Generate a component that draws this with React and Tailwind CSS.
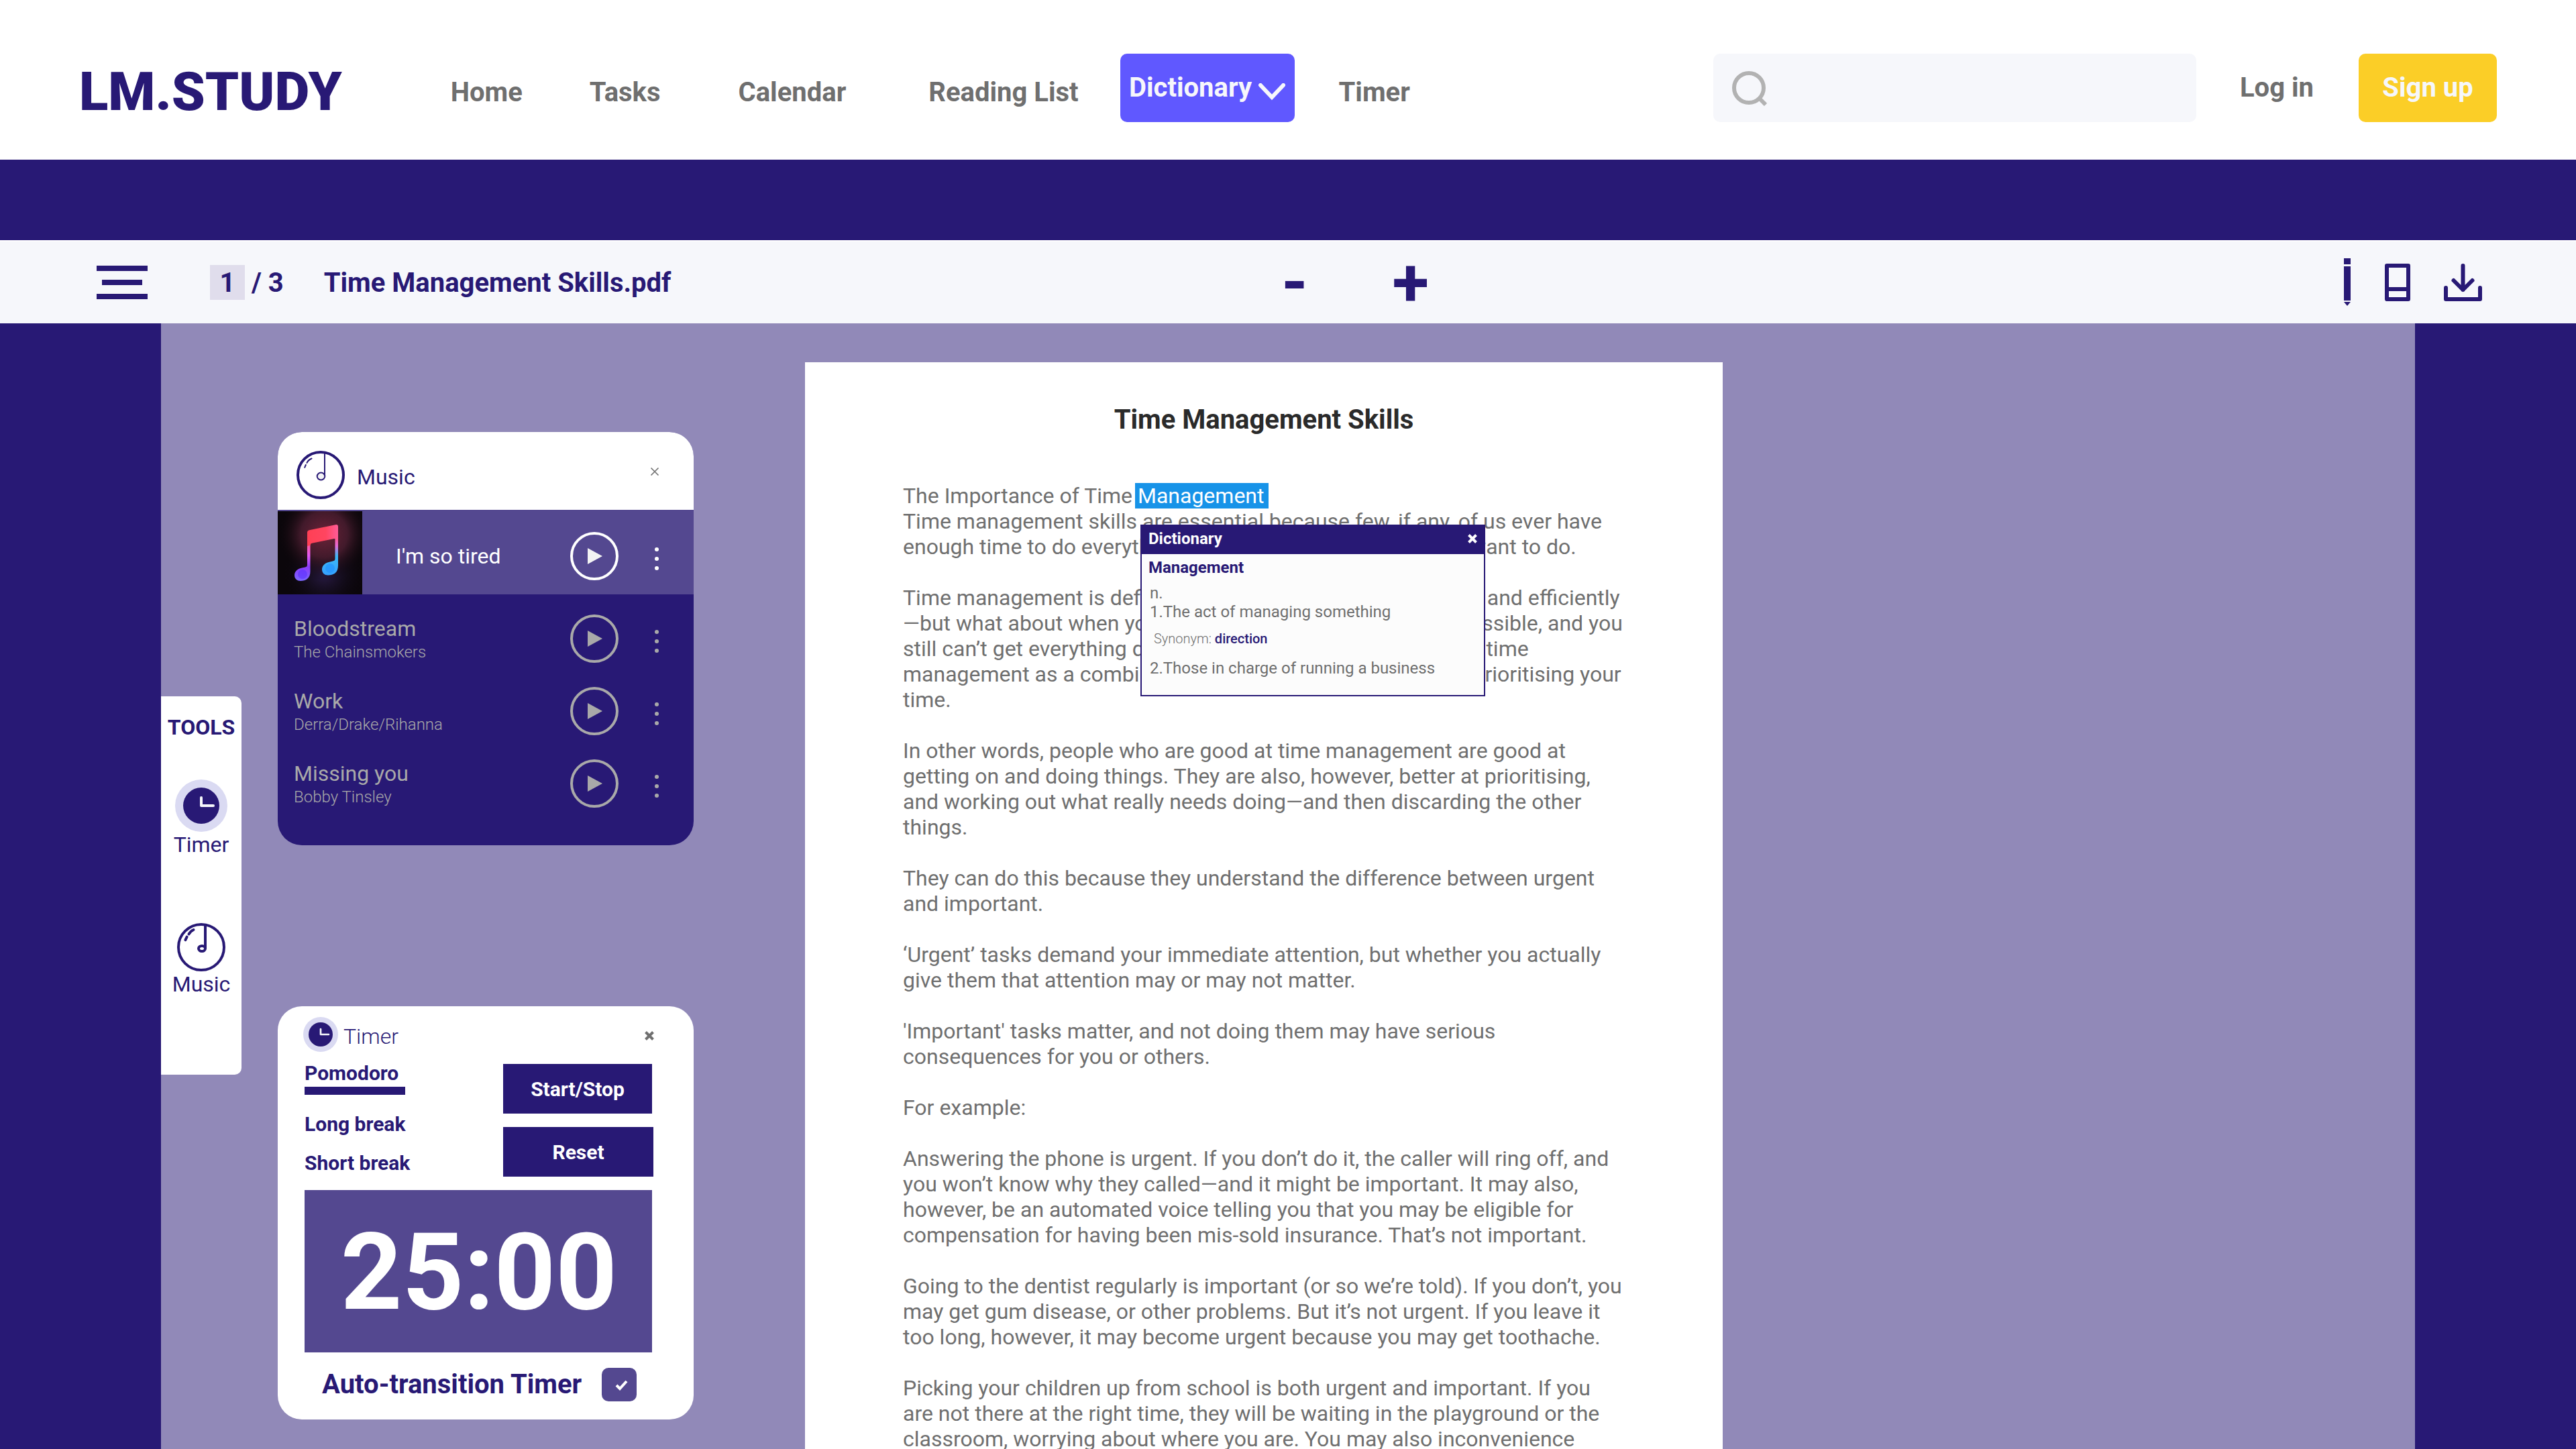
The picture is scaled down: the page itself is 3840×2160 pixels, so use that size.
import { useState } from "react";

const TRACKS = [
  { title: "Bloodstream", artist: "The Chainsmokers" },
  { title: "Work", artist: "Derra/Drake/Rihanna" },
  { title: "Missing you", artist: "Bobby Tinsley" },
];

function Clock({ className }) {
  return (
    <svg viewBox="0 0 78 78" className={className} aria-hidden="true">
      <circle cx="39" cy="39" r="39" fill="#dadaf2" />
      <circle cx="39" cy="39" r="27" fill="#281975" />
      <path d="M39 27V39H57" fill="none" stroke="#f6f7fb" strokeWidth="4" strokeLinecap="round" strokeLinejoin="round" />
    </svg>
  );
}

function Disc({ bold = false }) {
  return (
    <svg viewBox="0 0 72 72" className="size-[72px] shrink-0" fill="none" stroke="#281975" strokeLinecap="round" aria-hidden="true">
      <circle cx="36" cy="36" r="34" strokeWidth="4" />
      <g strokeWidth={bold ? 4 : 2}>
        <path d="M42 4V38" strokeLinecap="butt" />
        <ellipse cx={bold ? 37 : 36.5} cy="38" rx={bold ? 5 : 5.8} ry={bold ? 4 : 5.4} fill={bold ? "none" : "#f3f3f5"} />
        <path d={bold ? "M24.5 10Q20 12 17.5 16.5M14.6 20.6L12.4 25.2" : "M22.5 11.5Q17 14 15.5 18M13.8 21L12.2 24.8"} />
      </g>
    </svg>
  );
}

function Cross({ className, thick = false }) {
  return (
    <svg viewBox="0 0 14 14" className={className} fill="none" stroke="currentColor" strokeWidth={thick ? 4 : 1.6} aria-hidden="true">
      <path d="M1.5 1.5L12.5 12.5M12.5 1.5L1.5 12.5" />
    </svg>
  );
}

function TrackControls({ title, triangle }) {
  return (
    <div className="ml-auto flex items-center gap-[54px] pr-[52px]">
      <button type="button" aria-label={`Play ${title}`}>
        <svg viewBox="0 0 72 72" className="size-[72px]" aria-hidden="true">
          <circle cx="36" cy="36" r="34" fill="none" stroke="currentColor" strokeWidth="4" />
          <path d="M26 24L48 36L26 48Z" className={triangle} />
        </svg>
      </button>
      <button type="button" aria-label={`More options for ${title}`} className="mt-2">
        <svg viewBox="0 0 6 34" className="h-[34px] w-1.5" fill="currentColor" aria-hidden="true">
          <circle cx="3" cy="3" r="3" />
          <circle cx="3" cy="17" r="3" />
          <circle cx="3" cy="31" r="3" />
        </svg>
      </button>
    </div>
  );
}

function AlbumArt() {
  return (
    <svg viewBox="0 0 126 124" className="h-[124px] w-[126px] shrink-0 self-end" role="img" aria-label="Album cover">
      <defs>
        <radialGradient id="glowRed" cx="0.55" cy="0.28" r="0.55">
          <stop offset="0" stopColor="#6b2238" />
          <stop offset="0.5" stopColor="#421a2b" />
          <stop offset="1" stopColor="#0a0509" stopOpacity="0" />
        </radialGradient>
        <radialGradient id="glowBlue" cx="0.55" cy="0.75" r="0.5">
          <stop offset="0" stopColor="#2a1c48" />
          <stop offset="1" stopColor="#0a0509" stopOpacity="0" />
        </radialGradient>
        <linearGradient id="noteLeft" x1="0" y1="20" x2="0" y2="104" gradientUnits="userSpaceOnUse">
          <stop offset="0.1" stopColor="#ff4058" />
          <stop offset="0.35" stopColor="#ff5a9c" />
          <stop offset="0.55" stopColor="#e45af5" />
          <stop offset="0.75" stopColor="#8a3cf8" />
          <stop offset="1" stopColor="#7a68ff" />
        </linearGradient>
        <linearGradient id="noteRight" x1="0" y1="20" x2="0" y2="96" gradientUnits="userSpaceOnUse">
          <stop offset="0.2" stopColor="#ff5580" />
          <stop offset="0.42" stopColor="#e46ad8" />
          <stop offset="0.62" stopColor="#3cb8f5" />
          <stop offset="1" stopColor="#35a0ff" />
        </linearGradient>
        <linearGradient id="noteBeam" x1="44" y1="0" x2="90" y2="0" gradientUnits="userSpaceOnUse">
          <stop offset="0" stopColor="#ff4055" />
          <stop offset="0.6" stopColor="#ff4560" />
          <stop offset="1" stopColor="#ff5c98" />
        </linearGradient>
      </defs>
      <rect width="126" height="124" fill="#0b060b" />
      <rect width="126" height="124" fill="url(#glowBlue)" />
      <rect width="126" height="124" fill="url(#glowRed)" />
      <path d="M44 32V80Q44 83 41 83.500L36 84.500C28 86 25 91 25 95.500C25 101 29 104 34 104C42 104 48.500 100 48.500 90V46Z" fill="url(#noteLeft)" />
      <path d="M85.500 38V71Q85.500 74 82 74.500L76 76C69 78 66 82 66 87C66 92 70 95.500 75 95.500C83 95.500 90 92 90 81V24Z" fill="url(#noteRight)" />
      <path d="M44 32Q44 29 47 28.200L86 20.200Q90 19.500 90 23V44L86 42Q86 40.500 84 41L51 47.800Q48.500 48.300 48.500 51L44 52Z" fill="url(#noteBeam)" />
      <circle cx="37" cy="94" r="7" fill="#5a30ff" opacity="0.6" />
      <circle cx="78" cy="85" r="7" fill="#2090ff" opacity="0.6" />
    </svg>
  );
}

function Header() {
  const link = "text-[#6f6f6f]";
  return (
    <header className="flex h-[238px] shrink-0 items-start bg-white pt-20 pr-[118px] pl-[118px] text-[40px] leading-[48px] font-bold">
      <div className="flex h-[102px] items-center pt-3 text-[80px] leading-[96px] font-black text-[#281975]">LM.STUDY</div>
      <nav aria-label="Main" className="ml-[162px] flex h-[102px] items-center">
        <div className="flex items-center pt-3.5">
          <a href="#home" className={`${link} mr-[100px]`}>Home</a>
          <a href="#tasks" className={`${link} mr-[116px]`}>Tasks</a>
          <a href="#calendar" className={`${link} mr-[123px]`}>Calendar</a>
          <a href="#reading-list" className={`${link} mr-[62px]`}>Reading List</a>
        </div>
        <button type="button" aria-haspopup="menu" className="flex h-[102px] w-[260px] items-center justify-center gap-2.5 rounded-[10px] bg-[#6058ff] text-[#f6f7fb]">
          Dictionary
          <svg viewBox="0 0 40 26" className="mt-3 h-[26px] w-10" fill="none" stroke="currentColor" strokeWidth="6" strokeLinecap="round" aria-hidden="true">
            <path d="M3 3L20 21L37 3" />
          </svg>
        </button>
        <a href="#timer" className={`${link} ml-[66px] pt-3.5`}>Timer</a>
      </nav>
      <div className="ml-auto flex h-[102px] items-center">
        <label className="flex h-[102px] w-[720px] items-center rounded-[10px] bg-[#f6f7fb] pr-6 pl-7">
          <svg viewBox="0 0 54 54" className="size-[54px] shrink-0" fill="none" stroke="#b2b2b2" strokeWidth="6" aria-hidden="true">
            <circle cx="25" cy="27" r="22" />
            <path d="M40 42L50 52" />
          </svg>
          <input type="search" aria-label="Search" className="ml-4 w-full bg-transparent font-normal text-[#6f6f6f] outline-none" />
        </label>
        <a href="#login" className={`${link} ml-[65px]`}>Log in</a>
        <button type="button" className="ml-[67px] h-[102px] w-[206px] rounded-[10px] bg-[#fbce27] text-[#f6f7fb]">Sign up</button>
      </div>
    </header>
  );
}

function Toolbar() {
  return (
    <div className="mt-[120px] flex h-[124px] shrink-0 items-center border-t-2 border-white bg-[#f6f7fb] pr-[140px] pl-36 text-[40px] leading-[48px] font-bold text-[#281975]">
      <div className="flex flex-[9_1_0%] items-center">
        <button type="button" aria-label="Menu" className="flex w-[76px] flex-col items-center gap-[13px]">
          <span className="h-2 w-full bg-[#281975]" />
          <span className="h-2 w-[60px] bg-[#281975]" />
          <span className="h-2 w-full bg-[#281975]" />
        </button>
        <span className="ml-[93px] flex h-[52px] w-[52px] items-center justify-center bg-[#e0ddec] pt-0.5">1</span>
        <span className="ml-2.5 pt-0.5">/ 3</span>
        <span className="ml-[60px] pt-0.5">Time Management Skills.pdf</span>
      </div>
      <div className="flex items-center gap-[126px]">
        <button type="button" aria-label="Zoom out" className="text-[100px] leading-[100px] font-bold">-</button>
        <button type="button" aria-label="Zoom in" className="text-[100px] leading-[100px] font-bold">+</button>
      </div>
      <div className="flex flex-[8_1_0%] items-center justify-end">
        <button type="button" aria-label="Annotate">
          <svg viewBox="0 0 10 72" className="h-[72px] w-2.5" fill="#281975" aria-hidden="true">
            <path d="M0 0H10V9H0ZM0 12H10V63H0ZM0 65H10L5 71Z" />
          </svg>
        </button>
        <button type="button" aria-label="Page view" className="ml-[51px]">
          <svg viewBox="0 0 38 56" className="h-14 w-[38px]" fill="none" stroke="#281975" strokeWidth="6" strokeLinejoin="round" aria-hidden="true">
            <path d="M3 3H35V53H3ZM3 38H35" />
          </svg>
        </button>
        <button type="button" aria-label="Download" className="ml-[50px]">
          <svg viewBox="0 0 57 56" className="h-14 w-[57px]" fill="none" stroke="#281975" strokeWidth="6" strokeLinecap="round" strokeLinejoin="round" aria-hidden="true">
            <path d="M28.500 3V39M14.500 25L28.500 39L42.500 25M3 36V53H54V36" />
          </svg>
        </button>
      </div>
    </div>
  );
}

function ToolsTab() {
  return (
    <aside aria-label="Tools" className="mt-[556px] flex h-[564px] w-[120px] shrink-0 flex-col items-center rounded-r-[10px] bg-white pt-[27px] text-[32px] leading-[38px] text-[#281975]">
      <h2 className="font-bold">TOOLS</h2>
      <button type="button" className="mt-[59px] flex flex-col items-center">
        <Clock className="size-[78px]" />
        Timer
      </button>
      <button type="button" className="mt-[98px] flex flex-col items-center">
        <Disc bold />
        Music
      </button>
    </aside>
  );
}

function MusicCard() {
  return (
    <section aria-label="Music" className="overflow-hidden rounded-[36px] bg-[#281975] text-[32px] leading-[38px]">
      <div className="flex h-[116px] bg-white pt-7 pr-[51px] pl-7 text-[#281975]">
        <Disc />
        <h2 className="ml-[18px] flex h-[72px] items-center pt-1.5">Music</h2>
        <button type="button" aria-label="Close music" className="mt-6 ml-auto self-start text-[#6f6f6f]">
          <Cross className="size-3.5" />
        </button>
      </div>
      <div className="flex h-[126px] bg-[#544890] text-white">
        <AlbumArt />
        <div className="flex flex-1 items-center pt-3">
          <span className="ml-[50px]">I'm so tired</span>
          <TrackControls title="I'm so tired" triangle="fill-[#f3f3f3]" />
        </div>
      </div>
      <ul className="pt-3 pb-[38px] text-[#a9a9a9]">
        {TRACKS.map((t) => (
          <li key={t.title} className="flex h-[108px] items-center pl-6">
            <div className="pt-0.5">
              <div>{t.title}</div>
              <div className="text-[24px] leading-[32px] font-light">{t.artist}</div>
            </div>
            <TrackControls title={t.title} triangle="fill-[#a9a9a9]" />
          </li>
        ))}
      </ul>
    </section>
  );
}

function TimerCard() {
  const [auto, setAuto] = useState(true);
  return (
    <section aria-label="Timer" className="h-[616px] rounded-[36px] bg-white pt-4 text-[#281975]">
      <div className="flex items-center pr-[59px] pl-[38px]">
        <Clock className="size-[52px]" />
        <h2 className="ml-2 pt-1.5 text-[32px] leading-[38px] font-light">Timer</h2>
        <button type="button" aria-label="Close timer" className="mt-1 ml-auto text-[#6f6f6f]">
          <Cross className="size-3.5" thick />
        </button>
      </div>
      <div className="mt-3.5 mr-[60px] ml-10 flex items-start justify-between text-[30px] leading-[36px] font-bold">
        <div className="flex flex-col items-start">
          <button type="button" className="w-[150px] border-b-12 border-[#281975] pb-0.5 text-left">Pomodoro</button>
          <button type="button" className="mt-[26px]">Long break</button>
          <button type="button" className="mt-[22px]">Short break</button>
        </div>
        <div className="mt-1 flex w-[224px] flex-col items-start gap-5 text-white">
          <button type="button" className="h-[74px] w-[222px] bg-[#281975] pt-0.5">Start/Stop</button>
          <button type="button" className="h-[74px] w-full bg-[#281975] pt-0.5">Reset</button>
        </div>
      </div>
      <div className="mt-5 mr-[62px] ml-10 flex h-[242px] items-center justify-center bg-[#544890] pt-1 pl-0.5 text-[160px] leading-[188px] font-bold text-white">25:00</div>
      <label className="mt-[23px] flex items-center pl-[66px] text-[40px] leading-[48px] font-bold">
        Auto-transition Timer
        <span className="relative ml-[30px] h-[50px] w-[52px]">
          <input
            type="checkbox"
            checked={auto}
            onChange={(e) => setAuto(e.target.checked)}
            className="block h-full w-full appearance-none rounded-[10px] bg-[#544890]"
          />
          {auto && (
            <svg viewBox="0 0 52 50" className="pointer-events-none absolute inset-0" fill="none" stroke="#fff" strokeWidth="4" aria-hidden="true">
              <path d="M22 26L27 31L37 20" />
            </svg>
          )}
        </span>
      </label>
    </section>
  );
}

function DictionaryPopup() {
  return (
    <div role="dialog" aria-label="Dictionary" className="absolute top-full left-2 mt-6 h-[256px] w-[514px] border-2 border-[#281975] bg-[#fcfcfc] text-[24px] leading-[28px] text-[#6f6f6f]">
      <div className="flex h-[42px] items-center justify-between bg-[#281975] px-2.5 pb-1 font-bold text-white">
        Dictionary
        <button type="button" aria-label="Close dictionary">
          <Cross className="size-3.5" thick />
        </button>
      </div>
      <div className="px-2.5 pt-1.5">
        <h3 className="font-bold text-[#281975]">Management</h3>
        <div className="pl-0.5">
          <p className="mt-2.5">n.</p>
          <p>1.The act of managing something</p>
          <p className="mt-3 ml-1.5 text-[20px] font-light">
            Synonym: <a href="#direction" className="font-medium text-[#281975]">direction</a>
          </p>
          <p className="mt-4">2.Those in charge of running a business</p>
        </div>
      </div>
    </div>
  );
}

function Document() {
  return (
    <article className="mt-[58px] bg-white px-[146px] pt-[62px] text-[32px] leading-[38px] text-[#6f6f6f]">
      <h1 className="text-center text-[40px] leading-[48px] font-bold text-[#2a2a2a]">Time Management Skills</h1>
      <div className="mt-[70px] flex flex-col gap-[38px]">
        <p>
          The Importance of Time{" "}
          <span className="relative -ml-1 inline-block">
            <mark className="block bg-[#1793e8] pr-1.5 pl-1 text-white">Management</mark>
            <DictionaryPopup />
          </span>
          <br />
          Time management skills are essential because few, if any, of us ever have enough time to do everything that is
          asked of us, or that we want to do.
        </p>
        <p>
          Time management is defined as using your time productively and efficiently<wbr />
          —but what about when you are working as productively as possible, and you still can’t get everything done? It
          may be better to think about time management as a combination of working productively and prioritising your
          time.
        </p>
        <p>
          In other words, people who are good at time management are good at getting on and doing things. They are also,
          however, better at prioritising, and working out what really needs doing—and then discarding the other things.
        </p>
        <p>They can do this because they understand the difference between urgent and important.</p>
        <p>
          ‘Urgent’ tasks demand your immediate attention, but whether you actually give them that attention may or may
          not matter.
        </p>
        <p>'Important' tasks matter, and not doing them may have serious consequences for you or others.</p>
        <p>For example:</p>
        <p>
          Answering the phone is urgent. If you don’t do it, the caller will ring off, and you won’t know why they
          called—and it might be important. It may also, however, be an automated voice telling you that you may be
          eligible for compensation for having been mis-sold insurance. That’s not important.
        </p>
        <p>
          Going to the dentist regularly is important (or so we’re told). If you don’t, you may get gum disease, or other
          problems. But it’s not urgent. If you leave it too long, however, it may become urgent because you may get
          toothache.
        </p>
        <p>
          Picking your children up from school is both urgent and important. If you are not there at the right time, they
          will be waiting in the playground or the classroom, worrying about where you are. You may also inconvenience
        </p>
      </div>
    </article>
  );
}

export default function App() {
  return (
    <div className="flex h-screen flex-col overflow-hidden bg-[#281975] font-['Roboto',sans-serif]">
      <Header />
      <Toolbar />
      <main className="mx-[6.25%] grid min-h-0 flex-1 grid-cols-[960fr_1368fr_1032fr] items-start overflow-hidden bg-[#9189b8]">
        <div className="flex items-start">
          <ToolsTab />
          <div className="mt-[162px] ml-[54px] flex w-[620px] flex-col gap-60">
            <MusicCard />
            <TimerCard />
          </div>
        </div>
        <Document />
      </main>
    </div>
  );
}
